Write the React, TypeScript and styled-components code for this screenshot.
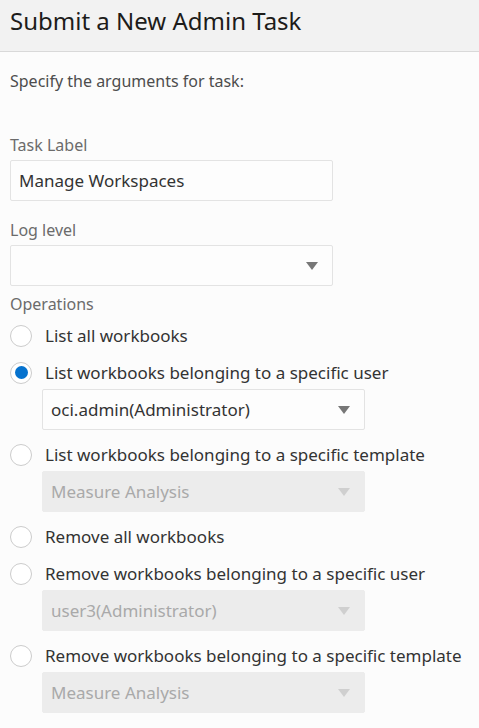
import React from "react";
import styled, { createGlobalStyle } from "styled-components";

const Global = createGlobalStyle`
  html, body {
    margin: 0;
    padding: 0;
    background: #fcfcfc;
  }
  body {
    font-family: "Noto Sans", "Open Sans", sans-serif;
    color: #333;
  }
`;

const Page = styled.div`
  width: 479px;
  min-height: 728px;
  background: #fcfcfc;
`;

const Header = styled.header`
  height: 52px;
  background: #f2f2f2;
  border-bottom: 1px solid #d9d9d9;
  display: flex;
  align-items: center;
  padding: 0 10px;
  box-sizing: border-box;
`;

const Title = styled.h1`
  margin: 0;
  margin-top: -10px;
  font-size: 24px;
  font-weight: 400;
  color: #1d1c1a;
`;

const Body = styled.div`
  padding: 18px 10px 0 10px;
  display: flex;
  flex-direction: column;
`;

const Intro = styled.p`
  margin: 0 0 42px 0;
  font-size: 16px;
  line-height: 22px;
  color: #4d4d4d;
`;

const FieldLabel = styled.label<{ $gap?: number }>`
  display: block;
  font-size: 16px;
  line-height: 22px;
  color: #6b6b6b;
  margin-bottom: ${(p) => p.$gap ?? 4}px;
`;

const Field = styled.div<{ $after?: number }>`
  display: flex;
  flex-direction: column;
  margin-bottom: ${(p) => p.$after ?? 0}px;
`;

const Box = styled.div<{ $disabled?: boolean }>`
  width: 323px;
  height: 41px;
  box-sizing: border-box;
  border: 1px solid ${(p) => (p.$disabled ? "#ececec" : "#e3e3e3")};
  background: ${(p) => (p.$disabled ? "#ececec" : "#fdfdfd")};
  border-radius: 2px;
  display: flex;
  align-items: center;
  padding: 0 14px 0 8px;
  font-size: 17px;
  color: ${(p) => (p.$disabled ? "#a9a9a9" : "#333")};
`;

const BoxText = styled.span`
  flex: 1;
  white-space: nowrap;
`;

const Caret = styled.span<{ $disabled?: boolean }>`
  width: 0;
  height: 0;
  border-left: 6px solid transparent;
  border-right: 6px solid transparent;
  border-top: 8px solid ${(p) => (p.$disabled ? "#cfcfcf" : "#777")};
`;

const Radios = styled.div`
  display: flex;
  flex-direction: column;
`;

const RadioRow = styled.label`
  display: flex;
  align-items: center;
  height: 33px;
  margin-top: 4px;
  font-size: 17px;
  color: #333;
  white-space: nowrap;
`;

const Circle = styled.span<{ $on?: boolean }>`
  width: 22px;
  height: 22px;
  box-sizing: border-box;
  border: 1.5px solid #cccccc;
  border-radius: 50%;
  background: #fff;
  margin-right: 13px;
  display: flex;
  align-items: center;
  justify-content: center;
  flex: none;
  &::after {
    content: "";
    display: ${(p) => (p.$on ? "block" : "none")};
    width: 13px;
    height: 13px;
    border-radius: 50%;
    background: #0572ce;
  }
`;

const Nested = styled.div`
  padding-left: 32px;
  margin-bottom: 4px;
`;

type Op = { label: string; checked?: boolean; select?: { value: string; disabled?: boolean } };

const ops: Op[] = [
  { label: "List all workbooks" },
  { label: "List workbooks belonging to a specific user", checked: true, select: { value: "oci.admin(Administrator)" } },
  { label: "List workbooks belonging to a specific template", select: { value: "Measure Analysis", disabled: true } },
  { label: "Remove all workbooks" },
  { label: "Remove workbooks belonging to a specific user", select: { value: "user3(Administrator)", disabled: true } },
  { label: "Remove workbooks belonging to a specific template", select: { value: "Measure Analysis", disabled: true } },
];

function Select({ value, disabled }: { value: string; disabled?: boolean }) {
  return (
    <Box $disabled={disabled}>
      <BoxText>{value}</BoxText>
      <Caret $disabled={disabled} />
    </Box>
  );
}

export default function App() {
  return (
    <Page>
      <Global />
      <Header>
        <Title>Submit a New Admin Task</Title>
      </Header>
      <Body>
        <Intro>Specify the arguments for task:</Intro>
        <Field $after={18}>
          <FieldLabel>Task Label</FieldLabel>
          <Box>
            <BoxText>Manage Workspaces</BoxText>
          </Box>
        </Field>
        <Field $after={7}>
          <FieldLabel>Log level</FieldLabel>
          <Select value="" />
        </Field>
        <FieldLabel $gap={0}>Operations</FieldLabel>
        <Radios>
          {ops.map((op, i) => (
            <React.Fragment key={i}>
              <RadioRow>
                <Circle $on={op.checked} />
                {op.label}
              </RadioRow>
              {op.select && (
                <Nested>
                  <Select value={op.select.value} disabled={op.select.disabled} />
                </Nested>
              )}
            </React.Fragment>
          ))}
        </Radios>
      </Body>
    </Page>
  );
}
